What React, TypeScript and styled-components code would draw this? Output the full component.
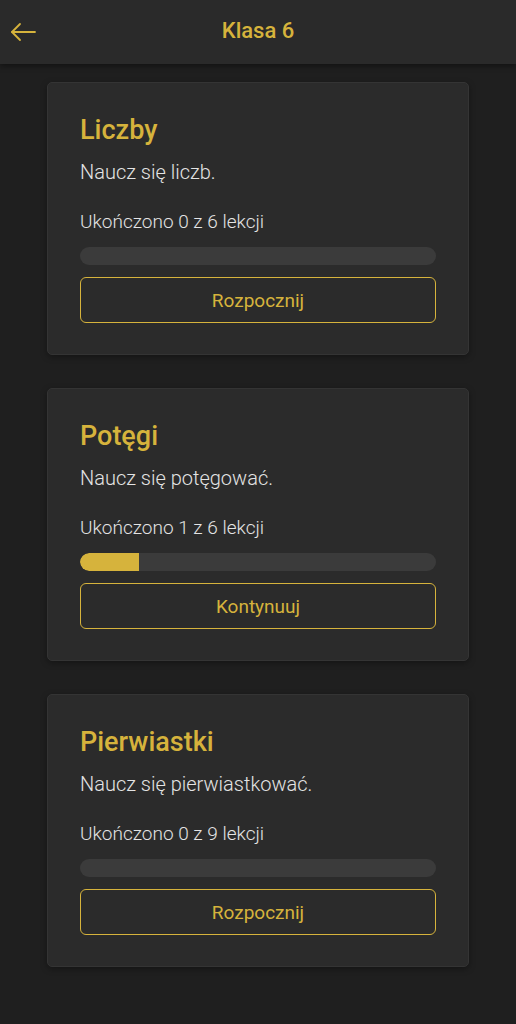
import React, { FC } from "react";
import styled, { createGlobalStyle } from "styled-components";

const gold = "#d6b33c";

const GlobalStyle = createGlobalStyle`
    html, body {
        margin: 0;
        padding: 0;
        background: #1f1f1f;
        font-family: Roboto, "Noto Sans", sans-serif;
    }
`

const Page = styled.div`
    min-height: 1024px;
    background: #1f1f1f;
`

const Header = styled.header`
    position: relative;
    height: 64px;
    background: #2a2a2a;
    box-shadow: 0 2px 6px rgba(0, 0, 0, 0.45);
    display: flex;
    align-items: center;
    justify-content: center;
`

const BackButton = styled.button`
    position: absolute;
    left: 8px;
    top: 18px;
    width: 30px;
    height: 28px;
    padding: 0;
    border: none;
    background: transparent;
    display: flex;
    align-items: center;
    justify-content: center;
    cursor: pointer;
`

const HeaderTitle = styled.h1`
    margin: 0 0 4px;
    font-size: 22px;
    font-weight: 500;
    color: ${gold};
`

const List = styled.main`
    display: flex;
    flex-direction: column;
    gap: 33px;
    padding: 18px 47px 40px;
`

const Card = styled.section`
    background: #2b2b2b;
    border: 1px solid #343434;
    border-radius: 5px;
    box-shadow: 0 2px 6px rgba(0, 0, 0, 0.35);
    padding: 31px 32px 31px;
    display: flex;
    flex-direction: column;
`

const Title = styled.h2`
    margin: 0;
    font-size: 27px;
    line-height: 32px;
    font-weight: 500;
    color: ${gold};
`

const Description = styled.p`
    margin: 14px 0 0;
    font-size: 20px;
    line-height: 24px;
    font-weight: 300;
    color: #e4e4e4;
`

const Progress = styled.p`
    margin: 26px 0 0;
    font-size: 19px;
    line-height: 24px;
    font-weight: 300;
    color: #e4e4e4;
`

const Track = styled.div`
    margin-top: 13px;
    height: 18px;
    border-radius: 9px;
    background: #3b3b3b;
    overflow: hidden;
`

const Fill = styled.div`
    height: 100%;
    background: ${gold};
    border-radius: 9px 0 0 9px;
`

const ActionButton = styled.button`
    margin-top: 12px;
    height: 46px;
    border: 1px solid ${gold};
    border-radius: 6px;
    background: transparent;
    color: ${gold};
    font-family: Roboto, "Noto Sans", sans-serif;
    font-size: 19px;
    font-weight: 400;
    cursor: pointer;
`

type Lesson = {
    title: string
    description: string
    done: number
    total: number
}

const lessons: Lesson[] = [
    { title: "Liczby", description: "Naucz się liczb.", done: 0, total: 6 },
    { title: "Potęgi", description: "Naucz się potęgować.", done: 1, total: 6 },
    { title: "Pierwiastki", description: "Naucz się pierwiastkować.", done: 0, total: 9 },
]

const ArrowLeft: FC = () => (
    <svg width="30" height="24" viewBox="0 0 30 24" fill="none" stroke={gold} strokeWidth="1.8" strokeLinecap="round" strokeLinejoin="round">
        <path d="M27 12H4" />
        <path d="M12 4l-8 8 8 8" />
    </svg>
)

const App: FC = () => {
    return (
        <>
            <GlobalStyle />
            <Page>
                <Header>
                    <BackButton aria-label="Wstecz">
                        <ArrowLeft />
                    </BackButton>
                    <HeaderTitle>Klasa 6</HeaderTitle>
                </Header>
                <List>
                    {lessons.map((l) => (
                        <Card key={l.title}>
                            <Title>{l.title}</Title>
                            <Description>{l.description}</Description>
                            <Progress>Ukończono {l.done} z {l.total} lekcji</Progress>
                            <Track>
                                <Fill style={{ width: `${(l.done / l.total) * 100}%` }} />
                            </Track>
                            <ActionButton>{l.done > 0 ? "Kontynuuj" : "Rozpocznij"}</ActionButton>
                        </Card>
                    ))}
                </List>
            </Page>
        </>
    )
}

export default App
